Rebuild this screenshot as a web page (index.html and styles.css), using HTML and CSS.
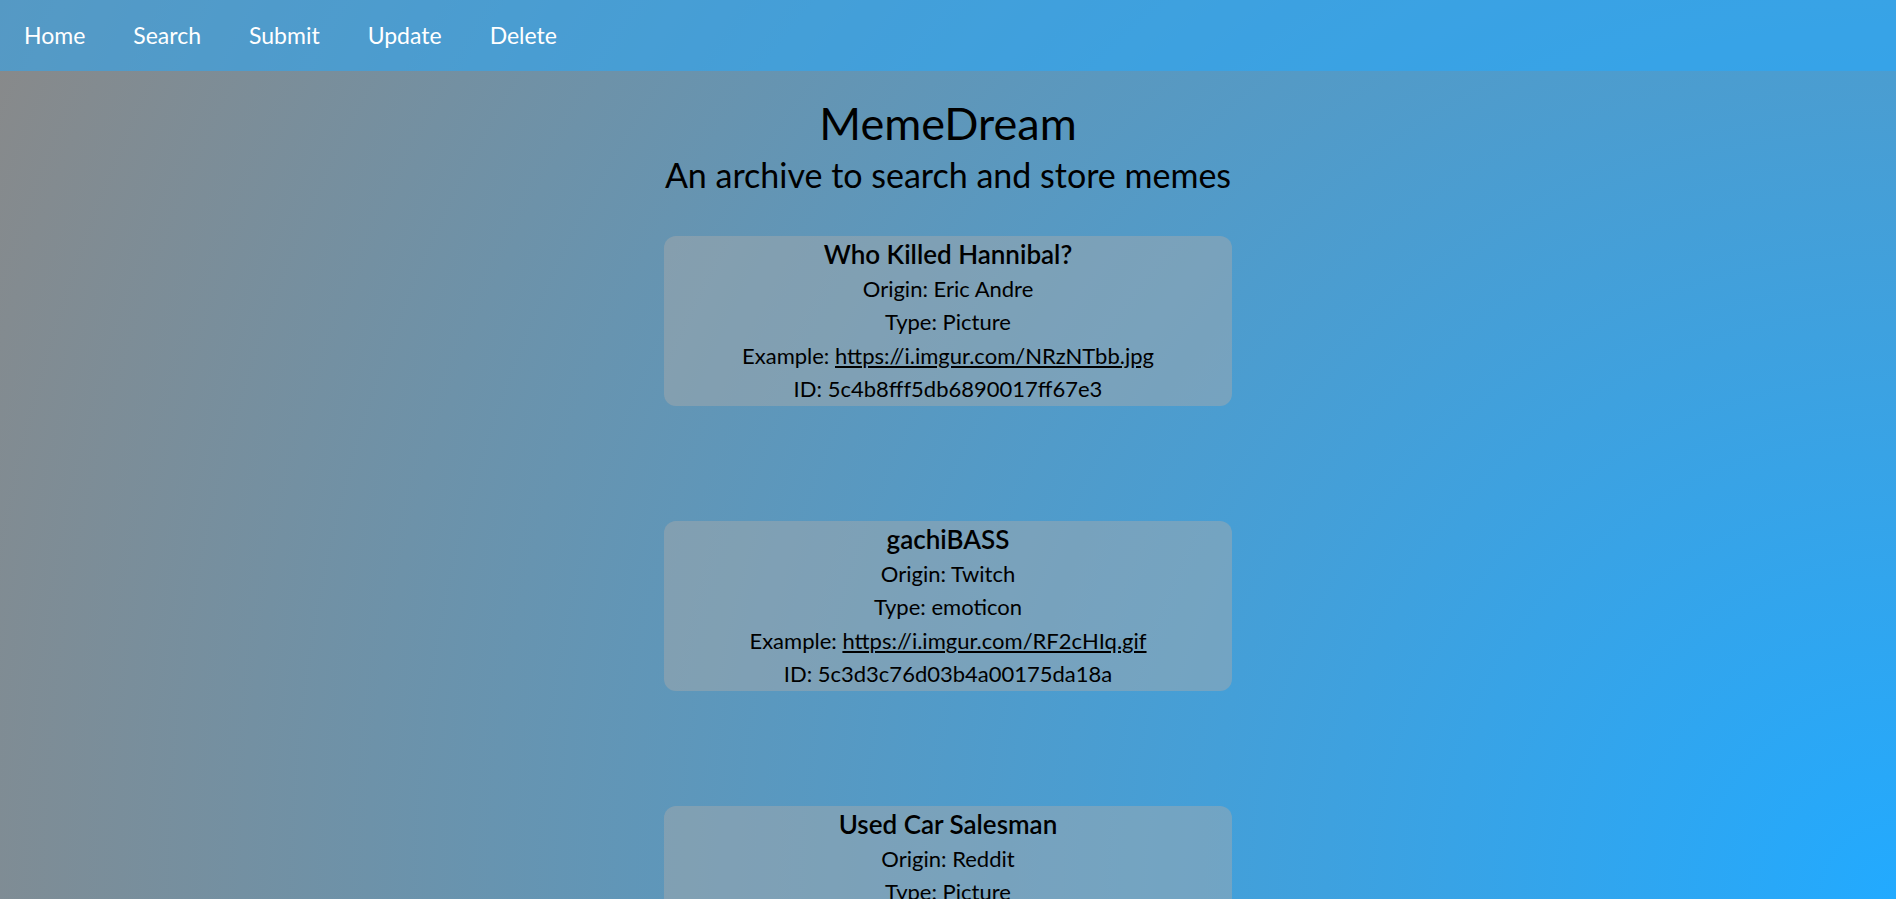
FILE: index.html
```html
<!DOCTYPE html>
<html lang="en">
<head>
<meta charset="utf-8">
<title>MemeDream</title>
<link rel="stylesheet" href="styles.css">
</head>
<body>
<nav class="topnav">
  <a class="nav-link" href="#">Home</a>
  <a class="nav-link" href="#">Search</a>
  <a class="nav-link" href="#">Submit</a>
  <a class="nav-link" href="#">Update</a>
  <a class="nav-link" href="#">Delete</a>
</nav>
<header class="hero">
  <h1 class="hero-title">MemeDream</h1>
  <h2 class="hero-sub">An archive to search and store memes</h2>
</header>
<main class="memes">
  <section class="meme-card">
    <h3 class="meme-name">Who Killed Hannibal?</h3>
    <p class="meme-line">Origin: Eric Andre</p>
    <p class="meme-line">Type: Picture</p>
    <p class="meme-line">Example: <a class="meme-link" href="#">https://i.imgur.com/NRzNTbb.jpg</a></p>
    <p class="meme-line">ID: 5c4b8fff5db6890017ff67e3</p>
  </section>
  <section class="meme-card">
    <h3 class="meme-name">gachiBASS</h3>
    <p class="meme-line">Origin: Twitch</p>
    <p class="meme-line">Type: emoticon</p>
    <p class="meme-line">Example: <a class="meme-link" href="#">https://i.imgur.com/RF2cHIq.gif</a></p>
    <p class="meme-line">ID: 5c3d3c76d03b4a00175da18a</p>
  </section>
  <section class="meme-card">
    <h3 class="meme-name">Used Car Salesman</h3>
    <p class="meme-line">Origin: Reddit</p>
    <p class="meme-line">Type: Picture</p>
    <p class="meme-line">Example: <a class="meme-link" href="#">https://i.imgur.com/bLk2Q3y.jpg</a></p>
    <p class="meme-line">ID: 5c3d3e51d03b4a00175da18b</p>
  </section>
</main>
</body>
</html>
```
FILE: styles.css
```css
html {
  scrollbar-width: none;
  background: radial-gradient(circle at bottom right, #22aaff, #898989) fixed;
  min-height: 100%;
}
html::-webkit-scrollbar { display: none; }

body {
  margin: 0;
  font-family: Lato, "Open Sans", sans-serif;
  color: #000;
}

.topnav {
  display: flex;
  align-items: center;
  height: 71px;
  background: rgba(34, 170, 255, 0.5);
}

.nav-link {
  padding: 0 24px;
  color: #fff;
  text-decoration: none;
  font-size: 23px;
  line-height: 71px;
}

.hero {
  display: flex;
  flex-direction: column;
  align-items: center;
  padding-top: 24px;
}

.hero-title {
  margin: 0;
  font-size: 45px;
  font-weight: 400;
  line-height: 56px;
}

.hero-sub {
  margin: 4px 0 0;
  font-size: 34px;
  font-weight: 400;
  line-height: 40px;
}

.memes {
  display: flex;
  flex-direction: column;
  align-items: center;
  gap: 115px;
  padding: 41px 0 60px;
}

.meme-card {
  width: 30%;
  box-sizing: border-box;
  padding-top: 2px;
  border-radius: 12px;
  background: rgba(170, 170, 170, 0.45);
  text-align: center;
}

.meme-name {
  margin: 0;
  font-size: 26px;
  font-weight: 600;
  line-height: 33.6px;
}

.meme-line {
  margin: 0;
  font-size: 22px;
  line-height: 33.6px;
}

.meme-link {
  color: inherit;
  text-decoration: underline;
}
```
